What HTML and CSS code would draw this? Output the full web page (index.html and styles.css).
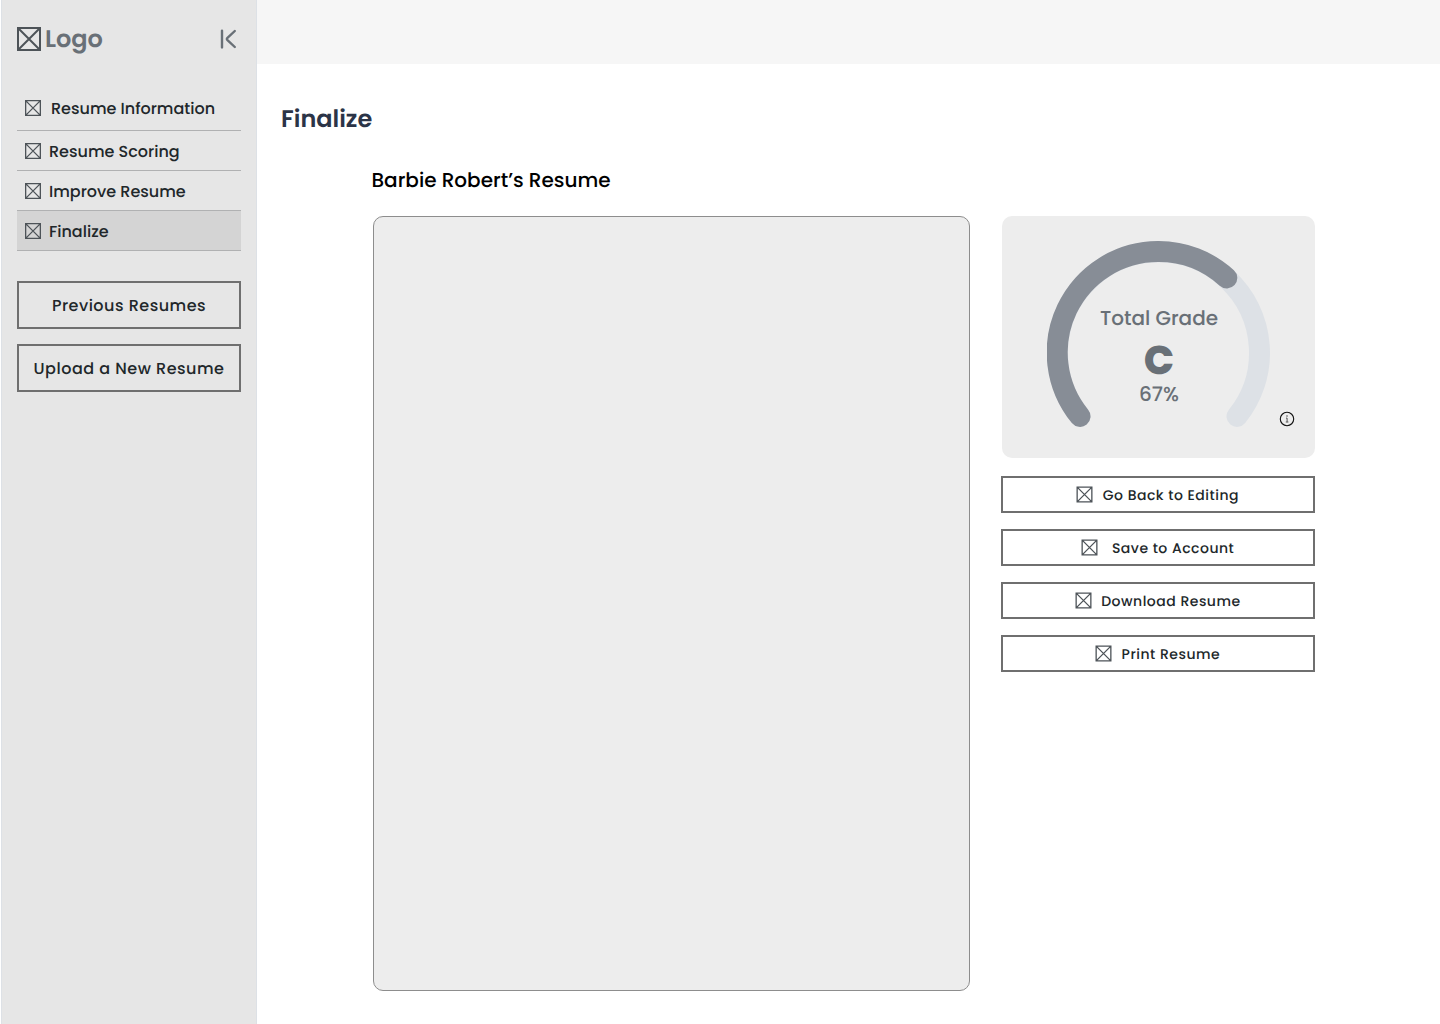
FILE: index.html
```html
<!DOCTYPE html>
<html lang="en">
<head>
<meta charset="utf-8">
<title>Finalize</title>
<link rel="stylesheet" href="styles.css">
</head>
<body>
<svg class="defs" width="0" height="0" aria-hidden="true">
  <symbol id="box" viewBox="0 0 16 16"><path d="M.65.65h14.7v14.7H.65zM.65.65l14.7 14.7M15.35.65L.65 15.35" fill="none" stroke="currentColor" stroke-width="1.3"/></symbol>
  <symbol id="box-sm" viewBox="0 0 17 17"><path d="M1.15 1.15h14.7v14.7H1.15zM1.15 1.15l14.7 14.7M15.85 1.15L1.15 15.85" fill="none" stroke="currentColor" stroke-width="1.3"/></symbol>
</svg>
<div class="app">
  <aside class="sidebar">
    <div class="brand">
      <svg class="brand-icon" viewBox="0 0 24 24"><path d="M1 1h22v22H1zM1 1l22 22M23 1L1 23" fill="none" stroke="currentColor" stroke-width="2"/></svg>
      <span class="brand-name">Logo</span>
      <svg class="collapse" viewBox="0 0 18 20"><path d="M3 1.6v16.8M15.8 2L8.2 9.2q-.8.8 0 1.6l7.6 7.2" fill="none" stroke="currentColor" stroke-width="2.4" stroke-linecap="round" stroke-linejoin="round"/></svg>
    </div>
    <nav class="menu">
      <a class="item first"><svg class="icon"><use href="#box"/></svg><span>Resume Information</span></a>
      <a class="item"><svg class="icon"><use href="#box"/></svg><span>Resume Scoring</span></a>
      <a class="item"><svg class="icon"><use href="#box"/></svg><span>Improve Resume</span></a>
      <a class="item active"><svg class="icon"><use href="#box"/></svg><span>Finalize</span></a>
    </nav>
    <div class="side-actions">
      <button class="btn">Previous Resumes</button>
      <button class="btn">Upload a New Resume</button>
    </div>
  </aside>
  <div class="page">
    <header class="topbar"></header>
    <main class="main">
      <h1 class="title">Finalize</h1>
      <h2 class="subtitle">Barbie Robert’s Resume</h2>
      <div class="columns">
        <section class="preview"></section>
        <section class="panel">
          <div class="grade">
            <svg class="gauge" viewBox="0 0 223 188">
              <g fill="none" stroke-width="21" stroke-linecap="round">
                <path d="M33 175.4A101 101 0 1 1 190 175.4" stroke="#dde1e6"/>
                <path d="M33 175.4A101 101 0 0 1 111.5 10.5A101 101 0 0 1 179.8 37" stroke="#878d96"/>
              </g>
            </svg>
            <div class="grade-text">
              <span class="grade-label">Total Grade</span>
              <span class="grade-letter">C</span>
              <span class="grade-value">67%</span>
            </div>
            <svg class="info" viewBox="0 0 16 16"><circle cx="8" cy="8" r="6.7" fill="none" stroke="#111" stroke-width="1.1"/><path d="M7 7.1h1.1v3.8M6.8 11h2.6" fill="none" stroke="#555" stroke-width="1"/><circle cx="8" cy="5" r=".8" fill="#555"/></svg>
          </div>
          <div class="actions">
            <button class="btn small"><svg class="icon"><use href="#box-sm"/></svg><span>Go Back to Editing</span></button>
            <button class="btn small wide"><svg class="icon"><use href="#box-sm"/></svg><span>Save to Account</span></button>
            <button class="btn small"><svg class="icon"><use href="#box-sm"/></svg><span>Download Resume</span></button>
            <button class="btn small"><svg class="icon"><use href="#box-sm"/></svg><span>Print Resume</span></button>
          </div>
        </section>
      </div>
    </main>
  </div>
</div>
</body>
</html>
```
FILE: styles.css
```css
* { box-sizing: border-box; }
body { margin: 0; background: #fff; font-family: Poppins, Inter, sans-serif; color: #21272a; text-rendering: geometricPrecision; }
h1, h2 { margin: 0; }
.defs { position: absolute; }
.app { display: flex; height: 1024px; padding-left: 1px; overflow: hidden; }
.sidebar { width: 256px; flex: none; background: #e6e6e6; border-left: 1px solid #dde1e6; border-right: 1px solid #dde1e6; padding: 26px 15px 0; }
.brand { display: flex; align-items: center; height: 26px; color: #697077; }
.brand-icon { width: 24px; height: 24px; color: #4d5358; }
.brand-name { margin-left: 4px; padding-top: 2px; font-size: 24px; font-weight: 600; line-height: 26px; }
.collapse { width: 18px; height: 20px; margin-left: auto; margin-right: 4px; }
.menu { margin-top: 34px; display: flex; flex-direction: column; }
.item { display: flex; align-items: center; gap: 8px; height: 40px; padding-left: 8px; border-bottom: 1px solid #b0b1b2; font-size: 16px; font-weight: 500; line-height: 24px; white-space: nowrap; }
.item span { padding-top: 2px; }
.item.first { height: 45px; gap: 10px; }
.item.active { background: #d4d4d4; }
.icon { width: 16px; height: 16px; flex: none; color: #4d5358; }
.side-actions { display: flex; flex-direction: column; gap: 15px; margin-top: 30px; }
.btn { display: flex; align-items: center; justify-content: center; height: 48px; padding: 0; border: 2px solid #6f6f6f; background: none; font: 500 16px Poppins, Inter, sans-serif; letter-spacing: .5px; color: #21272a; text-rendering: geometricPrecision; white-space: nowrap; }
.page { flex: 1; }
.topbar { height: 64px; background: #f6f6f6; }
.main { padding: 40px 0 0 24px; }
.title { font-size: 24px; line-height: 32px; font-weight: 600; color: #2b3447; }
.subtitle { margin: 30px 0 0 90.5px; font-size: 20px; line-height: 28px; font-weight: 500; color: #000; }
.columns { display: flex; gap: 31px; margin: 22px 0 0 92px; }
.preview { width: 597px; height: 775px; border: 1px solid #8d8d8d; border-radius: 10px; background: #ededed; }
.panel { width: 314px; }
.grade { position: relative; margin-left: 1px; height: 242px; border-radius: 10px; background: #ededed; padding: 25px 0 0 45px; }
.gauge { display: block; width: 223px; height: 188px; }
.grade-text { position: absolute; inset: 88px -1px auto 0; display: flex; flex-direction: column; align-items: center; color: #697077; }
.grade-label { font-size: 20px; line-height: 28px; font-weight: 500; }
.grade-letter { font-size: 40px; line-height: 40px; margin-top: 8px; font-weight: 800; }
.grade-value { font-size: 20px; line-height: 28px; font-weight: 500; }
.info { position: absolute; left: 277px; top: 195px; width: 16px; height: 16px; }
.actions { display: flex; flex-direction: column; gap: 16px; margin-top: 18px; }
.btn.small { height: 37px; font-size: 14px; gap: 9.4px; padding-right: .6px; }
.btn.small .icon { width: 17px; height: 17px; }
.btn.small.wide { gap: 13.8px; }
.btn.small span { padding-top: 1px; }
```
